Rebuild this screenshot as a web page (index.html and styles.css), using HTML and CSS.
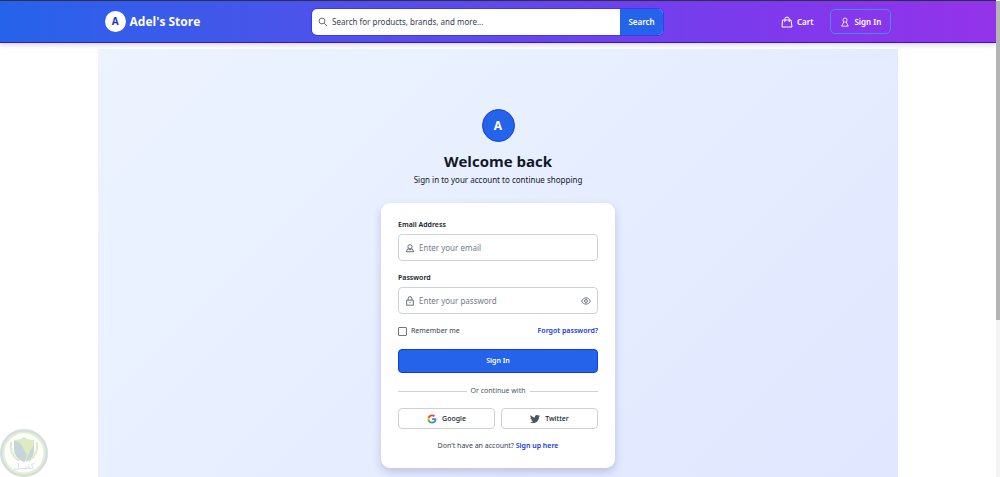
FILE: index.html
```html
<!DOCTYPE html>
<html lang="en">
<head>
<meta charset="utf-8">
<title>Sign in - Adel's Store</title>
<link rel="stylesheet" href="styles.css">
</head>
<body>
<div class="page">
  <header class="header">
    <div class="header-inner">
      <a class="brand" href="#"><span class="brand-mark">A</span>Adel's Store</a>
      <form class="search" role="search">
        <svg class="search-icon" viewBox="0 0 24 24"><circle cx="9.500" cy="9.500" r="7"/><path d="M15 15l7 7"/></svg>
        <input class="search-input" type="text" aria-label="Search" placeholder="Search for products, brands, and more...">
        <button class="search-button" type="button">Search</button>
      </form>
      <nav class="actions">
        <a class="cart" href="#"><svg class="cart-icon" viewBox="0 0 24 24"><path d="M3 8h17l2 14H2z"/><path d="M7.500 12V6.500a4.500 4.500 0 0 1 9 0V12"/></svg>Cart</a>
        <a class="header-signin" href="#"><svg class="user-icon" viewBox="0 0 24 24"><circle cx="12" cy="7.500" r="5"/><path d="M9 12l-5 10h16l-5-10"/></svg>Sign In</a>
      </nav>
    </div>
  </header>
  <main class="main">
    <div class="mark">A</div>
    <h1 class="title">Welcome back</h1>
    <p class="subtitle">Sign in to your account to continue shopping</p>
    <form class="card">
      <label class="label" for="email">Email Address</label>
      <div class="field">
        <svg class="field-icon" viewBox="0 0 24 24"><circle cx="12" cy="9" r="5"/><path d="M7 13l-4 8h18l-4-8M8 16h8"/></svg>
        <input class="field-input" id="email" type="email" placeholder="Enter your email">
      </div>
      <label class="label" for="password">Password</label>
      <div class="field">
        <svg class="field-icon" viewBox="0 0 24 24"><path d="M4 10h16v12H4zM7.500 10V6a4.500 4.500 0 0 1 9 0V10M12 14v3"/></svg>
        <input class="field-input" id="password" type="password" placeholder="Enter your password">
        <button class="reveal" type="button" aria-label="Show password"><svg class="eye-icon" viewBox="0 0 24 24"><path d="M1.500 12C4 7 7.500 4.500 12 4.500S20 7 22.500 12C20 17 16.500 19.500 12 19.500S4 17 1.500 12z"/><circle cx="12" cy="12" r="3.500"/></svg></button>
      </div>
      <div class="options">
        <label class="remember" for="remember"><input class="checkbox" id="remember" type="checkbox">Remember me</label>
        <a class="link" href="#">Forgot password?</a>
      </div>
      <button class="submit" type="button">Sign In</button>
      <div class="divider">Or continue with</div>
      <div class="socials">
        <button class="social" type="button"><svg class="social-icon" viewBox="0 0 24 24"><path fill="#4285f4" d="M22.560 12.250c0-.780-.070-1.530-.200-2.250H12v4.260h5.920c-.260 1.370-1.040 2.530-2.210 3.310v2.770h3.570c2.080-1.920 3.280-4.740 3.280-8.090z"/><path fill="#34a853" d="M12 23c2.970 0 5.460-.980 7.280-2.660l-3.570-2.770c-.980.660-2.230 1.060-3.710 1.060-2.860 0-5.290-1.930-6.160-4.530H2.180v2.840C3.990 20.530 7.700 23 12 23z"/><path fill="#fbbc05" d="M5.840 14.090c-.220-.660-.350-1.360-.350-2.090s.130-1.430.350-2.090V7.070H2.180C1.430 8.550 1 10.220 1 12s.430 3.450 1.180 4.930z"/><path fill="#ea4335" d="M12 5.380c1.620 0 3.060.560 4.210 1.640l3.150-3.150C17.450 2.090 14.970 1 12 1 7.700 1 3.990 3.470 2.180 7.070l3.660 2.840C6.710 7.310 9.140 5.380 12 5.380z"/></svg>Google</button>
        <button class="social" type="button"><svg class="social-icon" viewBox="0 0 24 24"><path fill="#4b5563" d="M23.950 4.570a10 10 0 0 1-2.820.770 4.960 4.960 0 0 0 2.160-2.720c-.950.550-2 .950-3.130 1.180a4.920 4.920 0 0 0-8.380 4.480C7.690 8.090 4.070 6.130 1.640 3.160a4.920 4.920 0 0 0 1.520 6.570 4.900 4.900 0 0 1-2.230-.610v.060a4.920 4.920 0 0 0 3.950 4.830 5 5 0 0 1-2.210.080 4.940 4.940 0 0 0 4.600 3.420A9.870 9.870 0 0 1 0 19.540a13.990 13.990 0 0 0 7.550 2.210c9.050 0 14-7.500 14-13.980l-.020-.640a9.940 9.940 0 0 0 2.420-2.560z"/></svg>Twitter</button>
      </div>
      <p class="signup">Don't have an account? <a class="link" href="#">Sign up here</a></p>
    </form>
  </main>
</div>
<div class="scrollbar"><div class="thumb"></div></div>
<div class="badge">
  <svg class="badge-shield" viewBox="0 0 48 48"><circle cx="24" cy="24" r="22.500" fill="#fff" stroke="#d3dde2" stroke-width="3"/><circle cx="24" cy="24" r="20.500" fill="none" stroke="#e3f0cc" stroke-width="2"/><path fill="#dcebc0" d="M14 11q6 0 10-3 4 3 10 3v8q0 10-10 14-10-4-10-14z"/><path fill="#c7d4da" d="M14 12q5 0 8 5 2 4 4 7t-2 9q-10-4-10-13zM34 16v5q0 9-8 12 3-11 8-17z"/><path fill="none" stroke="#dcebc0" stroke-width="2" d="M11 13q-2 12 8 19M37 13q2 12-8 19"/></svg>
  <span class="badge-text" lang="ar">كفيــل</span>
</div>
</body>
</html>
```

FILE: styles.css
```css
* { box-sizing: border-box; }

body {
  margin: 0;
  height: 100vh;
  overflow: hidden;
  background: #fff;
  color: #111827;
  font: 7px/12px "Noto Sans", "Open Sans", sans-serif;
}

input, button { font: inherit; color: inherit; }
button { padding: 0; cursor: pointer; }
a { color: inherit; text-decoration: none; }
svg { flex: none; fill: none; stroke: currentColor; stroke-width: 2; }

.page {
  display: flex;
  flex-direction: column;
  height: 100%;
  margin-right: 4px;
}

.header {
  flex: none;
  height: 43px;
  border-top: 1px solid #2c2f4a;
  border-bottom: 1px solid #3a12e0;
  background: linear-gradient(90deg, #2563eb, #4f52ea 33%, #7c3aed 75%, #9333ea);
  box-shadow: 0 2px 5px rgba(40, 30, 20, 0.18);
  color: #fff;
}

.header-inner {
  display: flex;
  align-items: center;
  justify-content: space-between;
  width: 79%;
  height: 100%;
  margin: 0 auto;
}

.brand {
  display: flex;
  align-items: center;
  gap: 4px;
  font: 700 12px/20px "Open Sans", sans-serif;
}

.brand-mark {
  width: 21px;
  height: 21px;
  border-radius: 50%;
  background: #fff;
  color: #1d35c9;
  font-size: 10px;
  line-height: 21px;
  text-align: center;
}

.search {
  display: flex;
  align-items: center;
  width: 44.6%;
  height: 26px;
  margin-right: 6px;
  border-radius: 5px;
  overflow: hidden;
  background: #fff;
  box-shadow: 0 0 0 1px #3a3aee;
}

.search-icon { width: 10px; height: 10px; margin: 0 4px 0 6px; color: #4b5563; }

.search-input {
  flex: 1;
  min-width: 0;
  padding: 0;
  border: 0;
  background: none;
  font-size: 8px;
  outline: 0;
}
.search-input::placeholder { color: #374151; opacity: 1; }

.search-button {
  align-self: stretch;
  width: 43px;
  border: 0;
  background: #2563eb;
  color: #fff;
  font-size: 8px;
  font-weight: 600;
}

.actions { display: flex; align-items: center; gap: 17px; font-size: 8px; font-weight: 600; }
.cart { display: flex; align-items: center; gap: 4px; }
.cart-icon { width: 12px; height: 12px; }

.header-signin {
  display: flex;
  align-items: center;
  justify-content: center;
  gap: 4px;
  width: 61px;
  height: 25px;
  border: 1px solid #438cf0;
  border-radius: 5px;
}
.user-icon { width: 10px; height: 10px; }

.main {
  display: flex;
  flex: 1;
  flex-direction: column;
  align-items: center;
  width: 80.4%;
  min-height: 0;
  margin: 6px auto 0;
  padding-top: 60px;
  background: linear-gradient(135deg, #edf4ff, #e0e7ff);
}

.mark {
  flex: none;
  width: 33px;
  height: 33px;
  border: 1px solid #1240d8;
  border-radius: 50%;
  background: #2563eb;
  color: #fff;
  font: 700 12px/32px "Open Sans", sans-serif;
  text-align: center;
}

.title {
  margin: 8px 0 0;
  font: 700 15px/22px "Open Sans", sans-serif;
}

.subtitle { margin: 2px 0 0; font-size: 8px; line-height: 12px; }

.card {
  flex: none;
  width: 234px;
  margin-top: 17px;
  padding: 16px 17px;
  border-radius: 9px;
  background: #fff;
  box-shadow: 0 4px 9px rgba(60, 80, 140, 0.25);
}

.label { display: block; font-weight: 600; }

.field {
  display: flex;
  align-items: center;
  height: 27px;
  margin: 3px 0 11px;
  padding: 0 6px;
  border: 1px solid #cdd3da;
  border-radius: 4px;
}
.field-icon { width: 10px; height: 10px; margin-right: 4px; color: #4b5563; }

.field-input {
  flex: 1;
  min-width: 0;
  padding: 0;
  border: 0;
  background: none;
  font-size: 8px;
  outline: 0;
}
.field-input::placeholder { color: #757b87; opacity: 1; }

.reveal { display: flex; border: 0; background: none; color: #4b5563; }
.eye-icon { width: 10px; height: 10px; }

.options { display: flex; align-items: center; justify-content: space-between; }
.remember { display: flex; align-items: center; gap: 4px; color: #374151; }

.checkbox {
  appearance: none;
  width: 9px;
  height: 9px;
  margin: 0;
  border: 1px solid #767676;
  border-radius: 1px;
  background: #fff;
}

.link { color: #1238e0; font-weight: 600; }

.submit {
  display: block;
  width: 100%;
  height: 24px;
  margin: 12px 0;
  border: 1px solid #0f3be0;
  border-radius: 4px;
  background: #2563eb;
  color: #fff;
  font-weight: 600;
}

.divider { display: flex; align-items: center; gap: 4px; color: #4b5563; }
.divider::before, .divider::after { content: ""; flex: 1; height: 1px; background: #cdd1d6; }

.socials { display: grid; grid-template-columns: 1fr 1fr; gap: 6px; margin: 11px 0; }

.social {
  display: flex;
  align-items: center;
  justify-content: center;
  gap: 5px;
  height: 21px;
  border: 1px solid #cdd1d6;
  border-radius: 4px;
  background: #fff;
  font-weight: 500;
}
.social-icon { width: 10px; height: 10px; stroke: none; }

.signup { margin: 0; color: #374151; text-align: center; }

.scrollbar { position: fixed; top: 1px; right: 0; bottom: 0; width: 4px; background: #f3f3f3; }
.thumb { height: 67%; background: #b4b4b4; }

.badge { position: fixed; bottom: 0; left: 0; width: 48px; height: 48px; }
.badge-shield { display: block; width: 48px; height: 48px; stroke: none; }
.badge-text {
  position: absolute;
  right: 0;
  bottom: 5px;
  left: 0;
  color: #d3dde2;
  font: 400 8px/10px "DejaVu Sans", sans-serif;
  text-align: center;
}
```
